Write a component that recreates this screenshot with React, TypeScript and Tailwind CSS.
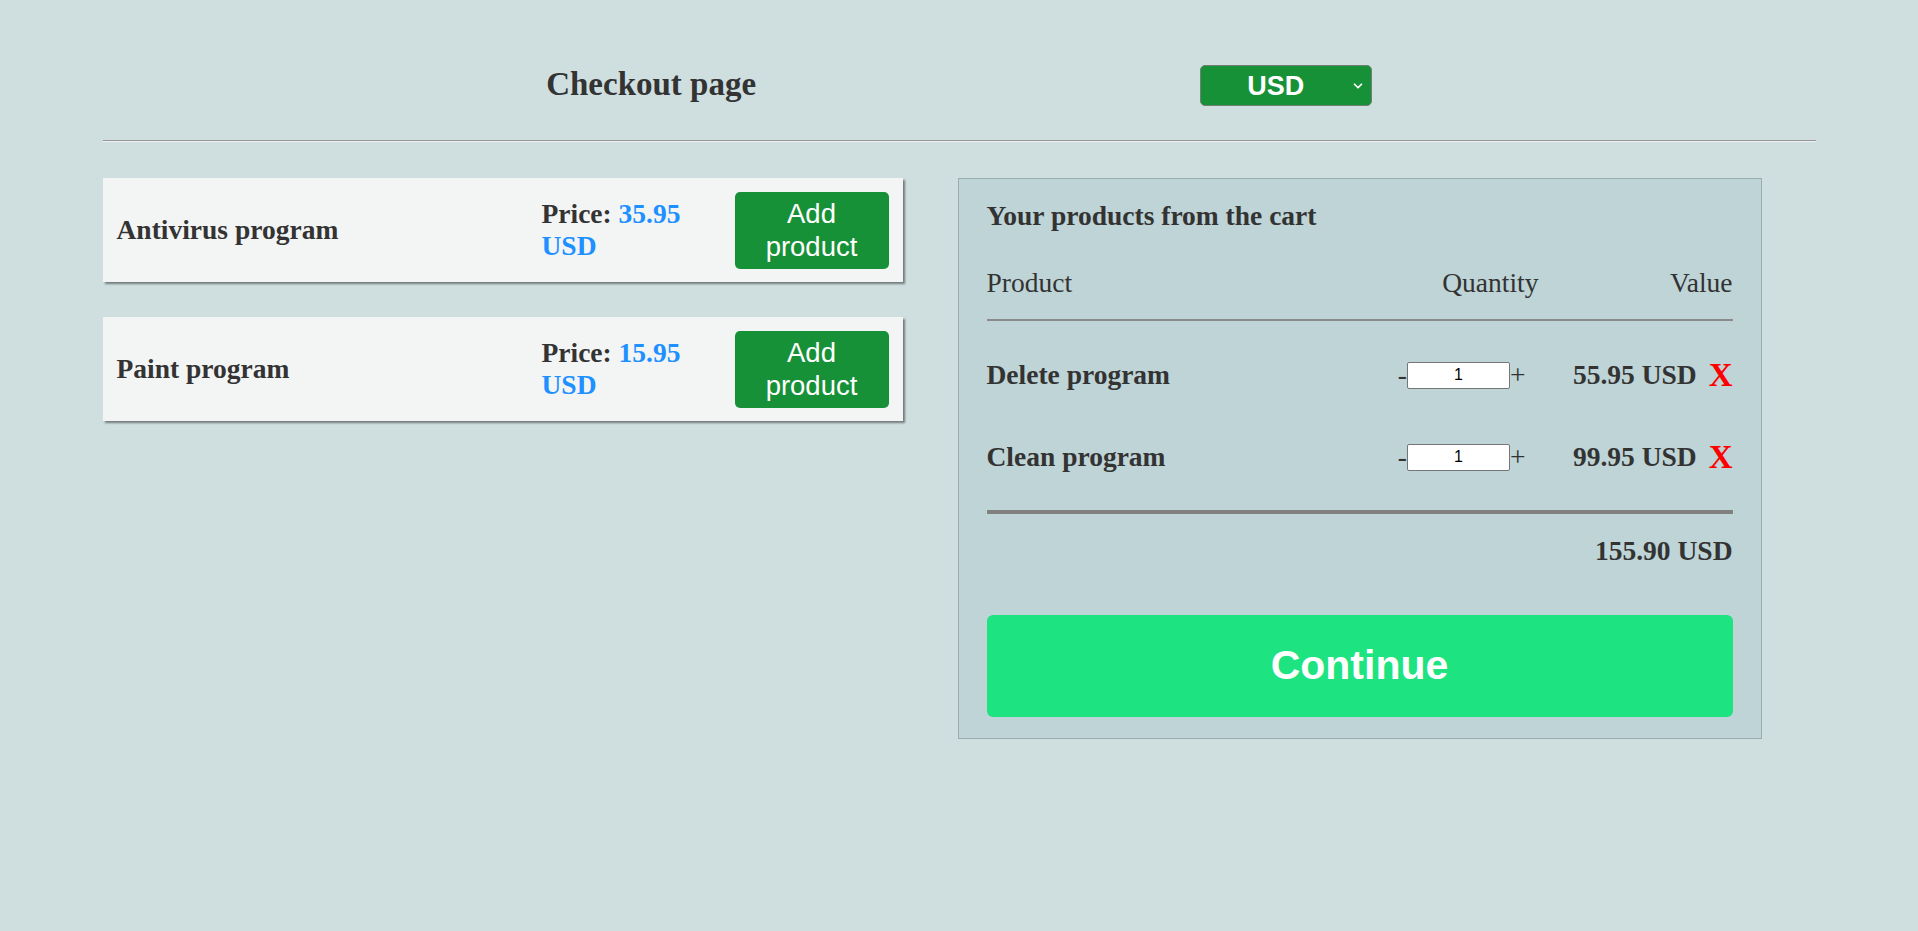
import { ChevronDown } from 'lucide-react';

type Product = {
    id: number;
    name: string;
    price: string;
};

type CartItem = {
    id: number;
    name: string;
    qty: number;
    value: string;
};

const products: Product[] = [
    { id: 1, name: 'Antivirus program', price: '35.95' },
    { id: 2, name: 'Paint program', price: '15.95' },
];

const cart: CartItem[] = [
    { id: 1, name: 'Delete program', qty: 1, value: '55.95' },
    { id: 2, name: 'Clean program', qty: 1, value: '99.95' },
];

const serif = "font-['Liberation_Serif','Times_New_Roman',serif]";
const sans = "font-['Liberation_Sans',Arial,sans-serif]";

function ProductCard({ product }: { product: Product }) {
    return (
        <div className="flex h-[104px] items-center bg-[#f3f5f5] pl-[14px] pr-[14px] shadow-[2px_2px_2px_rgba(0,0,0,0.45)]">
            <div className="flex-1 text-[27.5px] font-bold leading-[32px]">{product.name}</div>
            <div className="w-[193px] text-[27.5px] font-bold leading-[32px]">
                Price: <span className="text-[#1e90ff]">{product.price} USD</span>
            </div>
            <button className={`${sans} h-[77px] w-[154px] rounded-[5px] bg-[#179137] text-[27.5px] leading-[33px] text-white`}>
                Add
                <br />
                product
            </button>
        </div>
    );
}

function CartRow({ item }: { item: CartItem }) {
    return (
        <div className="flex h-[32px] items-center text-[27.5px] leading-[32px]">
            <div className="flex-1 font-bold">{item.name}</div>
            <div className="mr-[13px] flex items-center">
                <span>-</span>
                <input
                    type="text"
                    defaultValue={item.qty}
                    className={`${sans} h-[27px] w-[103px] rounded-[2px] border border-[#767676] bg-white text-center text-[16px] text-black`}
                />
                <span>+</span>
            </div>
            <div className="flex w-[194px] items-center justify-end gap-[12px]">
                <span className="font-bold">{item.value} USD</span>
                <span className="text-[33px] font-bold leading-[32px] text-[#ff0000]">X</span>
            </div>
        </div>
    );
}

export default function App() {
    return (
        <div className={`${serif} min-h-[931px] bg-[#cfdfe0] text-[#333]`}>
            <div className="mx-auto w-[1713px] pt-[65px]">
                <header className="flex items-start justify-evenly">
                    <h1 className="text-[33px] font-bold leading-[38px]">Checkout page</h1>
                    <div className="relative">
                        <select
                            className={`${sans} h-[41px] w-[172px] appearance-none rounded-[5px] border border-[#6f7f72] bg-[#179137] pr-[20px] text-center text-[27px] font-bold text-white`}
                            defaultValue="USD"
                        >
                            <option>USD</option>
                            <option>EUR</option>
                            <option>PLN</option>
                        </select>
                        <ChevronDown
                            size={14}
                            strokeWidth={3}
                            className="pointer-events-none absolute right-[7px] top-[14px] text-white"
                        />
                    </div>
                </header>

                <hr className="mt-[34px] h-0 border-t border-b border-t-[#949494] border-b-[#eef3f3]" />

                <main className="mt-[36px] flex items-start gap-[55px]">
                    <div className="flex w-[800px] flex-col gap-[35px]">
                        {products.map((p) => (
                            <ProductCard key={p.id} product={p} />
                        ))}
                    </div>

                    <section className="w-[804px] border border-[#9aaeb0] bg-[#bed4d6] px-[28px] pt-[21px] pb-[21px]">
                        <h2 className="text-[27.5px] font-bold leading-[32px]">Your products from the cart</h2>

                        <div className="mt-[35px] flex h-[54px] border-b-2 border-[#8a8a8a] pb-[22px] text-[27.5px] leading-[32px]">
                            <div className="flex-1">Product</div>
                            <div>Quantity</div>
                            <div className="w-[194px] text-right">Value</div>
                        </div>

                        <div className="flex flex-col gap-[50px] pt-[38px] pb-[37px]">
                            {cart.map((item) => (
                                <CartRow key={item.id} item={item} />
                            ))}
                        </div>

                        <div className="h-[4px] bg-[#808080]" />

                        <div className="mt-[21px] text-right text-[27.5px] font-bold leading-[32px]">155.90 USD</div>

                        <button className={`${sans} mt-[48px] h-[102px] w-full rounded-[6px] bg-[#1de381] text-[41px] font-bold text-white`}>
                            Continue
                        </button>
                    </section>
                </main>
            </div>
        </div>
    );
}
